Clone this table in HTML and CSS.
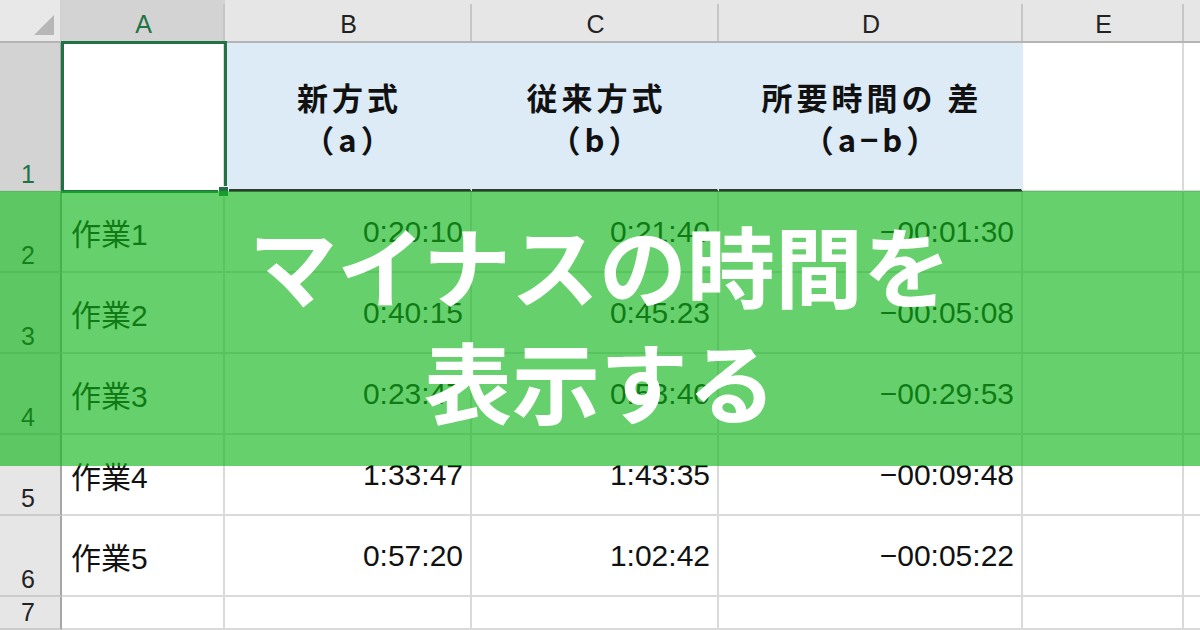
FILE: index.html
```html
<!DOCTYPE html>
<html lang="ja">
<head>
<meta charset="utf-8">
<title>マイナスの時間を表示する</title>
<link rel="stylesheet" href="styles.css">
</head>
<body>
<div class="sheet">
  <div class="corner"><span class="tri"></span></div>
  <div class="colhead sel">A</div>
  <div class="colhead">B</div>
  <div class="colhead">C</div>
  <div class="colhead">D</div>
  <div class="colhead">E</div>
  <div class="colhead last"></div>

  <div class="rowhead sel">1</div>
  <div class="cell"></div>
  <div class="cell hd"><span>新方式</span><span>（a）</span></div>
  <div class="cell hd"><span>従来方式</span><span>（b）</span></div>
  <div class="cell hd"><span>所要時間の 差</span><span>（a−b）</span></div>
  <div class="cell"></div>
  <div class="cell last"></div>

  <div class="rowhead">2</div>
  <div class="cell">作業1</div>
  <div class="cell num">0:20:10</div>
  <div class="cell num">0:21:40</div>
  <div class="cell num">−00:01:30</div>
  <div class="cell"></div>
  <div class="cell last"></div>

  <div class="rowhead">3</div>
  <div class="cell">作業2</div>
  <div class="cell num">0:40:15</div>
  <div class="cell num">0:45:23</div>
  <div class="cell num">−00:05:08</div>
  <div class="cell"></div>
  <div class="cell last"></div>

  <div class="rowhead">4</div>
  <div class="cell">作業3</div>
  <div class="cell num">0:23:47</div>
  <div class="cell num">0:53:40</div>
  <div class="cell num">−00:29:53</div>
  <div class="cell"></div>
  <div class="cell last"></div>

  <div class="rowhead">5</div>
  <div class="cell">作業4</div>
  <div class="cell num">1:33:47</div>
  <div class="cell num">1:43:35</div>
  <div class="cell num">−00:09:48</div>
  <div class="cell"></div>
  <div class="cell last"></div>

  <div class="rowhead">6</div>
  <div class="cell">作業5</div>
  <div class="cell num">0:57:20</div>
  <div class="cell num">1:02:42</div>
  <div class="cell num">−00:05:22</div>
  <div class="cell"></div>
  <div class="cell last"></div>

  <div class="rowhead">7</div>
  <div class="cell"></div>
  <div class="cell"></div>
  <div class="cell"></div>
  <div class="cell"></div>
  <div class="cell"></div>
  <div class="cell last"></div>
</div>

<div class="selbox"></div>
<div class="handle"></div>

<div class="banner">
  <div class="banner-line">マイナスの時間を</div>
  <div class="banner-line">表示する</div>
</div>
</body>
</html>
```

FILE: styles.css
```css
* {
  box-sizing: border-box;
  margin: 0;
  padding: 0;
}

html, body {
  width: 1200px;
  height: 630px;
  overflow: hidden;
  background: #ffffff;
}

body {
  position: relative;
  font-family: "Liberation Sans", "Noto Sans CJK JP", sans-serif;
  color: #111111;
}

.sheet {
  display: grid;
  grid-template-columns: 62px 163px 247px 247px 304px 161px 16px;
  grid-template-rows: 43px 149px repeat(5, 81px) 33px;
  width: 1200px;
  height: 630px;
}

.corner {
  background: #e8e8e8;
  border-bottom: 2px solid #b4b4b4;
  border-right: 2px solid #d0d0d0;
  display: flex;
  justify-content: flex-end;
  align-items: flex-end;
  padding: 0 6px 6px 0;
}

.tri {
  width: 20px;
  height: 20px;
  background: #b7b7b7;
  clip-path: polygon(100% 0, 100% 100%, 0 100%);
}

.colhead {
  position: relative;
  background: #e6e6e6;
  border-bottom: 2px solid #b4b4b4;
  display: flex;
  align-items: center;
  justify-content: center;
  font-size: 25px;
  color: #222222;
  padding-top: 8px;
}

.colhead::after {
  content: "";
  position: absolute;
  right: 0;
  top: 4px;
  bottom: 0;
  width: 2px;
  background: #c6c6c6;
}

.colhead.last::after {
  display: none;
}

.colhead.sel {
  background: #d3d3d3;
  color: #217346;
}

.rowhead {
  background: #e6e6e6;
  border-right: 2px solid #a6a6a6;
  border-bottom: 2px solid #cbcbcb;
  display: flex;
  justify-content: center;
  align-items: flex-end;
  font-size: 25px;
  line-height: 25px;
  padding-bottom: 3px;
  padding-right: 4px;
  color: #222222;
}

.rowhead.sel {
  background: #d3d3d3;
  color: #217346;
}

.cell {
  border-right: 2px solid #dadada;
  border-bottom: 2px solid #dadada;
  display: flex;
  align-items: center;
  font-size: 30px;
  padding: 1px 7px 0 9px;
  color: #111111;
  white-space: nowrap;
}

.cell.last {
  border-right: none;
}

.num {
  justify-content: flex-end;
}

.hd {
  background: #ddebf7;
  border-right-color: #ddebf7;
  border-bottom: 3px solid #363636;
  flex-direction: column;
  justify-content: center;
  align-items: center;
  font-family: "Noto Sans CJK JP", sans-serif;
  font-weight: 700;
  font-size: 31px;
  line-height: 42px;
  letter-spacing: 4px;
  padding: 4px 0 0 4px;
  color: #111111;
}

.selbox {
  position: absolute;
  left: 61px;
  top: 41px;
  width: 166px;
  height: 152px;
  border: 3px solid #217346;
}

.handle {
  position: absolute;
  left: 218px;
  top: 186px;
  width: 11px;
  height: 11px;
  background: #217346;
  border: 1px solid #ffffff;
}

.banner {
  position: absolute;
  left: 0;
  top: 191px;
  width: 1200px;
  height: 275px;
  background: rgba(16, 183, 25, 0.64);
  display: flex;
  flex-direction: column;
  align-items: center;
  justify-content: center;
  color: #ffffff;
  font-family: "Noto Sans CJK JP", sans-serif;
  font-weight: 700;
  font-size: 88px;
  line-height: 116px;
  padding-bottom: 16px;
}

.banner-line {
  white-space: nowrap;
}
```
